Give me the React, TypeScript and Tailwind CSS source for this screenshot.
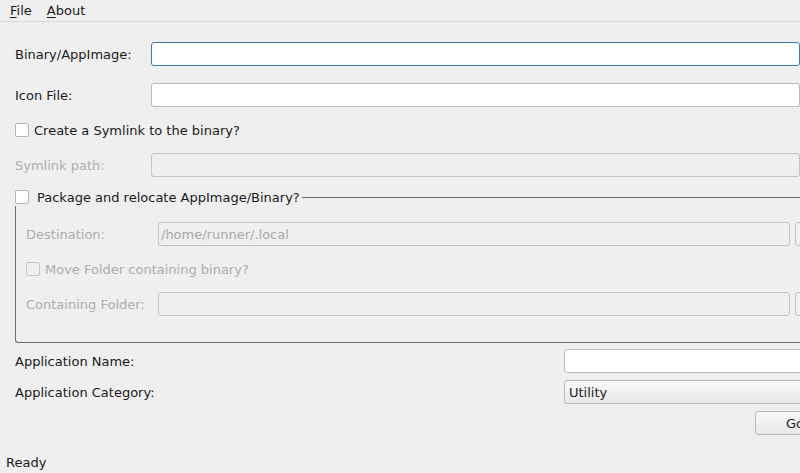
import React from "react";

const font = { fontFamily: '"DejaVu Sans", "Liberation Sans", sans-serif' };

function Check({ disabled }: { disabled?: boolean }) {
  return (
    <span
      className={`inline-block h-[14px] w-[14px] shrink-0 rounded-[2px] border ${
        disabled ? "border-[#c6c6c6] bg-[#efefef]" : "border-[#b4b4b4] bg-white"
      }`}
    />
  );
}

function Field({
  width,
  focused,
  disabled,
  value,
}: {
  width: string;
  focused?: boolean;
  disabled?: boolean;
  value?: string;
}) {
  const border = focused
    ? "border-[#3b7bb5]"
    : disabled
      ? "border-[#c4c4c4]"
      : "border-[#b9b9b9]";
  return (
    <div
      className={`flex h-[24px] shrink-0 items-center rounded-[3px] border px-[2px] ${border} ${
        disabled ? "bg-[#efefef] text-[#a9a9a9]" : "bg-white"
      } ${width}`}
    >
      {value}
    </div>
  );
}

function Row({
  label,
  labelWidth,
  disabled,
  children,
}: {
  label: string;
  labelWidth: string;
  disabled?: boolean;
  children: React.ReactNode;
}) {
  return (
    <div className="flex h-[24px] items-center">
      <span className={`shrink-0 ${labelWidth} ${disabled ? "text-[#adadad]" : ""}`}>{label}</span>
      {children}
    </div>
  );
}

export default function App() {
  return (
    <div
      className="flex h-[473px] w-[800px] flex-col overflow-hidden bg-[#efefef] text-[13px] leading-none text-[#1a1a1a]"
      style={font}
    >
      <div className="flex h-[22px] shrink-0 items-center gap-[15px] border-b border-[#dadada] pl-[10px] pb-[1px]">
        <span>
          <span className="underline underline-offset-2">F</span>ile
        </span>
        <span>
          <span className="underline underline-offset-2">A</span>bout
        </span>
      </div>

      <div className="flex flex-col pl-[15px]">
        <div className="mt-[20px]">
          <Row label="Binary/AppImage:" labelWidth="w-[136px]">
            <Field width="w-[649px]" focused />
          </Row>
        </div>
        <div className="mt-[17px]">
          <Row label="Icon File:" labelWidth="w-[136px]">
            <Field width="w-[649px]" />
          </Row>
        </div>
        <div className="mt-[16px] flex h-[14px] items-center gap-[5px]">
          <Check />
          <span>Create a Symlink to the binary?</span>
        </div>
        <div className="mt-[16px]">
          <Row label="Symlink path:" labelWidth="w-[136px]" disabled>
            <Field width="w-[649px]" disabled />
          </Row>
        </div>

        <div className="mt-[13px] w-[820px]">
          <div className="flex h-[14px] items-center">
            <Check />
            <span className="ml-[8px]">Package and relocate AppImage/Binary?</span>
            <span className="ml-[2px] h-px flex-1 bg-[#6a6a6a]" />
          </div>
          <div className="mt-[2px] flex flex-col rounded-bl-[3px] border-b border-l border-[#6a6a6a] pb-[26px] pl-[10px] pt-[16px]">
            <Row label="Destination:" labelWidth="w-[132px]" disabled>
              <Field width="w-[632px]" disabled value="/home/runner/.local" />
              <span className="ml-[5px] h-[24px] w-[60px] rounded-[3px] border border-[#c4c4c4] bg-[#efefef]" />
            </Row>
            <div className="mt-[16px] flex h-[14px] items-center gap-[5px] text-[#adadad]">
              <Check disabled />
              <span>Move Folder containing binary?</span>
            </div>
            <div className="mt-[16px]">
              <Row label="Containing Folder:" labelWidth="w-[132px]" disabled>
                <Field width="w-[632px]" disabled />
                <span className="ml-[5px] h-[24px] w-[60px] rounded-[3px] border border-[#c4c4c4] bg-[#efefef]" />
              </Row>
            </div>
          </div>
        </div>

        <div className="mt-[6px]">
          <Row label="Application Name:" labelWidth="w-[549px]">
            <Field width="w-[260px]" />
          </Row>
        </div>
        <div className="mt-[7px]">
          <Row label="Application Category:" labelWidth="w-[549px]">
            <div className="flex h-[24px] w-[260px] shrink-0 items-center rounded-[3px] border border-[#b6b6b6] bg-gradient-to-b from-[#f8f8f8] to-[#e9e9e9] pl-[4px]">
              Utility
            </div>
          </Row>
        </div>
        <div className="mt-[7px] flex pl-[740px]">
          <div className="flex h-[24px] w-[80px] shrink-0 items-center justify-center rounded-[3px] border border-[#b6b6b6] bg-gradient-to-b from-[#f8f8f8] to-[#e9e9e9]">
            Go
          </div>
        </div>
      </div>

      <div className="mt-auto flex h-[22px] items-center pl-[6px]">Ready</div>
    </div>
  );
}
